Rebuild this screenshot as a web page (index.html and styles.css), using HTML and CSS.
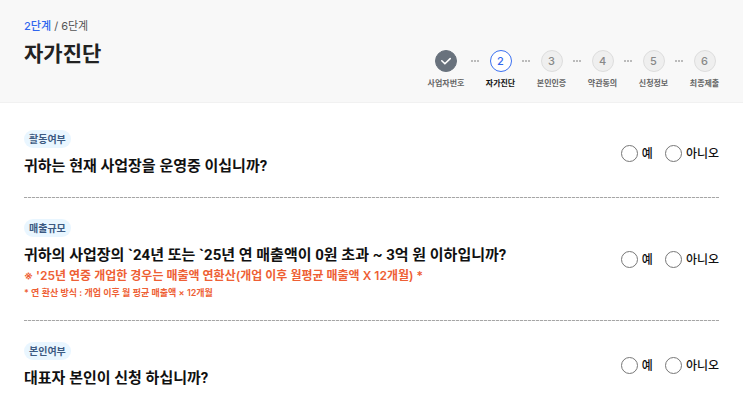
FILE: index.html
```html
<!DOCTYPE html>
<html lang="ko">
<head>
<meta charset="utf-8">
<meta name="viewport" content="width=device-width, initial-scale=1">
<title>자가진단</title>
<link rel="stylesheet" href="styles.css">
</head>
<body>
<header class="header">
  <div class="heading">
    <p class="count"><strong>2단계</strong> / 6단계</p>
    <h1 class="title">자가진단</h1>
  </div>
  <ol class="steps">
    <li class="step done"><span class="circle"><svg class="check" viewBox="0 0 12 12" aria-hidden="true"><path d="M1.8 5.8 L4.9 8.8 L10.2 3.6"/></svg></span><span class="name">사업자번호</span></li>
    <li class="step current" aria-current="step"><span class="circle">2</span><span class="name">자가진단</span></li>
    <li class="step"><span class="circle">3</span><span class="name">본인인증</span></li>
    <li class="step"><span class="circle">4</span><span class="name">약관동의</span></li>
    <li class="step"><span class="circle">5</span><span class="name">신청정보</span></li>
    <li class="step"><span class="circle">6</span><span class="name">최종제출</span></li>
  </ol>
</header>
<main class="questions">
  <section class="question">
    <div class="text">
      <span class="badge">활동여부</span>
      <h2 class="ask" id="q1">귀하는 현재 사업장을 운영중 이십니까?</h2>
    </div>
    <div class="answers" role="radiogroup" aria-labelledby="q1">
      <label class="answer"><input type="radio" name="active" value="yes">예</label>
      <label class="answer"><input type="radio" name="active" value="no">아니오</label>
    </div>
  </section>
  <section class="question">
    <div class="text">
      <span class="badge">매출규모</span>
      <h2 class="ask" id="q2">귀하의 사업장의 `24년 또는 `25년 연 매출액이 0원 초과 ~ 3억 원 이하입니까?</h2>
      <p class="note">※ '25년 연중 개업한 경우는 매출액 연환산(개업 이후 월평균 매출액 X 12개월) *</p>
      <p class="formula">* 연 환산 방식 : 개업 이후 월 평균 매출액 × 12개월</p>
    </div>
    <div class="answers" role="radiogroup" aria-labelledby="q2">
      <label class="answer"><input type="radio" name="sales" value="yes">예</label>
      <label class="answer"><input type="radio" name="sales" value="no">아니오</label>
    </div>
  </section>
  <section class="question">
    <div class="text">
      <span class="badge">본인여부</span>
      <h2 class="ask" id="q3">대표자 본인이 신청 하십니까?</h2>
    </div>
    <div class="answers" role="radiogroup" aria-labelledby="q3">
      <label class="answer"><input type="radio" name="self" value="yes">예</label>
      <label class="answer"><input type="radio" name="self" value="no">아니오</label>
    </div>
  </section>
</main>
</body>
</html>
```
FILE: styles.css
```css
* { box-sizing: border-box; }
body, h1, h2, p, ol { margin: 0; padding: 0; }

body {
  background: #fff;
  color: #111;
  font-family: Inter, "Noto Sans CJK KR", sans-serif;
}

.header {
  display: flex;
  justify-content: space-between;
  align-items: flex-end;
  padding: 18px 24px 12px;
  background: #f8f8f8;
  border-bottom: 1px solid #f1f1f1;
}

.heading { align-self: flex-start; }
.count { font-size: 11px; line-height: 16px; color: #555; }
.count strong { color: #2f66ee; font-weight: 500; }
.title {
  margin-top: 4px;
  font-size: 21px;
  line-height: 32px;
  font-weight: 700;
  color: #222;
}

.steps { display: flex; gap: 22px; padding-top: 32px; list-style: none; }
.step {
  position: relative;
  display: flex;
  flex-direction: column;
  align-items: center;
  gap: 4px;
  width: 29px;
}
.step.done { width: 36px; }
/* Three dots centred in the gap after each step */
.step:not(:last-child)::after {
  content: "";
  position: absolute;
  left: calc(100% + 7px);
  top: 10px;
  width: 8px;
  height: 2px;
  background: repeating-linear-gradient(90deg, #bbb 0 2px, transparent 2px 3px);
}
.circle {
  display: flex;
  align-items: center;
  justify-content: center;
  width: 22px;
  height: 22px;
  border: 1px solid #ddd;
  border-radius: 50%;
  background: #efefef;
  color: #888;
  font-size: 11px;
  line-height: 16px;
  font-weight: 500;
}
.name { font-size: 8px; line-height: 14px; font-weight: 700; color: #666; white-space: nowrap; }
.done .circle { background: #69727d; border-color: #69727d; }
.current .circle { background: #fff; border-color: #3b70f0; color: #2f66ee; }
.current .name { color: #111; }
.check { width: 12px; height: 12px; fill: none; stroke: #fff; stroke-width: 1.6; stroke-linecap: round; stroke-linejoin: round; }

.questions { padding: 6px 24px 0; }
.question {
  position: relative;
  display: flex;
  justify-content: space-between;
  align-items: center;
  gap: 16px;
  padding: 21px 0;
}
/* Fine dashed rule between questions */
.question:not(:last-child)::after {
  content: "";
  position: absolute;
  right: 0;
  bottom: 0;
  left: 0;
  height: 1px;
  background: repeating-linear-gradient(90deg, #a6a6a6 0 3px, #eee 3px 4px);
}
.badge {
  display: block;
  width: fit-content;
  margin-bottom: 7px;
  padding: 0 5px;
  border-radius: 9px;
  background: #e9f6ff;
  color: #3c5a82;
  font-size: 10px;
  line-height: 18px;
  font-weight: 700;
}
.ask { font-family: Roboto, "Noto Sans CJK KR", sans-serif; font-size: 15px; line-height: 22px; font-weight: 700; color: #111; }
.note { font-size: 12px; line-height: 20px; font-weight: 600; color: #ee5f35; }
.formula { font-size: 9px; line-height: 14px; font-weight: 600; color: #ee5f35; }

.answers { display: flex; flex-shrink: 0; gap: 12px; }
.answer {
  display: flex;
  align-items: center;
  gap: 4px;
  font-size: 12px;
  line-height: 18px;
  font-weight: 500;
}
.answer input {
  appearance: none;
  width: 17px;
  height: 17px;
  margin: 0;
  border: 1px solid #777;
  border-radius: 50%;
  background: #fff;
}
.answer input:checked { border: 5px solid #2f66ee; }
```
